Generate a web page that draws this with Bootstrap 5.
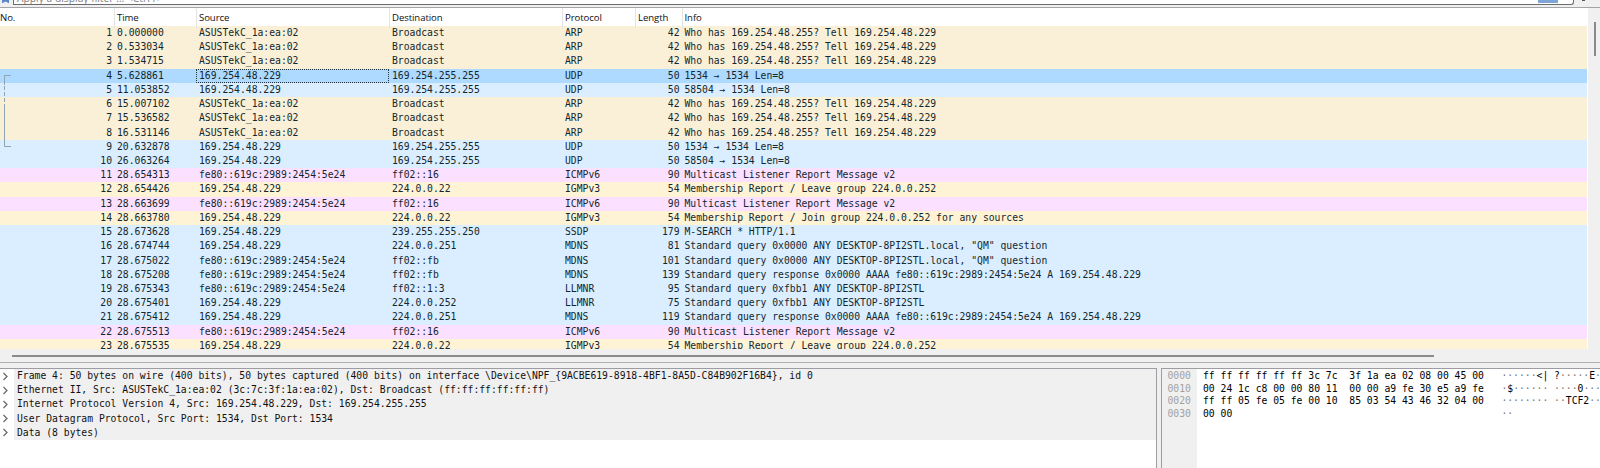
<!DOCTYPE html>
<html lang="en">
<head>
<meta charset="utf-8">
<title>Packet capture</title>
<link href="https://cdn.jsdelivr.net/npm/bootstrap@5.3.0/dist/css/bootstrap.min.css" rel="stylesheet">
<style>
html,body{height:468px;overflow:hidden}
body{background:#f0f0f0;color:#111;line-height:1;font-size:9.73px;font-family:"DejaVu Sans Mono","Liberation Mono",monospace}
.ui-font{font-family:"Open Sans","Noto Sans",sans-serif}
.filterbar{height:8px;border-bottom:1px solid #a4a4a8}
.filterbox{height:5px;width:1561px;border:1px solid #6c6c6c;border-top:0;border-radius:0 0 3px 0;background:#fff}
.filterhint{color:#808080;font-size:10.3px;line-height:14px;margin-top:-9.5px;padding-left:3px;white-space:pre}
.apply-btn{width:20px;height:3px;background:#7fa5d6;margin-right:15px}
.packet-list{height:341px}
.packet-rows{width:1588px;background:#fff}
.pk{display:grid;grid-template-columns:114px 82px 193px 173px 73px 46.5px 1fr;white-space:pre;width:1587px}
.pk-head{height:18px;font-size:9.6px;line-height:20px;letter-spacing:-.08px}
.pk-head>div{border-left:1px solid #e4e4e4;padding-left:2px}
.pk-head>div:first-child{border:0;padding-left:0}
.pk-line{height:14.22px;line-height:14.6px;color:#12272e}
.pk-line>div{padding-left:3px}
.pk-line>.num{text-align:right;padding:0 2px 0 0}
.arp{background:#faf0d7}.udp{background:#daeeff}.icmp{background:#fce0ff}.igmp{background:#fff3d6}.sel{background:#aedaff}
.cell-focus{outline:1px dotted #234;outline-offset:-1px}
.related{left:4px;top:67px;width:8px;height:72px}
.v-thumb{width:2px;height:34px;margin:14px 0 0 6px;background:#8a8a8a}
.h-scroll{height:14px;border-bottom:1px solid #b0b0b4;padding:6px 0 0 12px}
.h-thumb{width:1422px;height:2px;background:#8c8c8c}
.panes{height:100px;margin-top:5px}
.details{width:1157px;border:solid #9c9ca2;border-width:1px 1px 0 0;background:#fff}
.tree-line{height:14.2px;line-height:14.4px;white-space:pre}
.tree-text{background:#f0f0f0;padding-left:3px}
.tree-toggle{width:14px}
.hexview{border:solid #9c9ca2;border-width:1px 0 0 1px;background:#fff;margin-left:4px;line-height:12.6px;white-space:pre}
.hex-offset{width:35px;padding:1px 0 0 5.5px;background:#f0f0f0;color:#a2a2a2}
.hex-body{padding:1px 0 0 6px;color:#000}
.hex-body i{font-style:normal;color:#777}
</style>
</head>
<body>
<div class="d-flex flex-column h-100">
  <div class="filterbar d-flex overflow-hidden ui-font flex-shrink-0">
    <svg width="13" height="5" viewBox="0 0 13 5"><path d="M2 0h7v3.300L5.500 1.500 2 3.300z" fill="#5b87c8"/></svg>
    <div class="filterbox d-flex justify-content-between overflow-hidden">
      <div class="filterhint">Apply a display filter … &lt;Ctrl-/&gt;</div>
      <div class="apply-btn"></div>
    </div>
    <svg class="ms-2" width="4" height="3" viewBox="0 0 4 3"><path d="M0 0h3v1H0z" fill="#555"/></svg>
  </div>
  <div class="packet-list d-flex flex-shrink-0 overflow-hidden">
    <div class="packet-rows position-relative overflow-hidden flex-shrink-0">
      <div class="pk pk-head ui-font"><div>No.</div><div>Time</div><div>Source</div><div>Destination</div><div>Protocol</div><div>Length</div><div>Info</div></div>
      <div id="packets"></div>
      <svg class="related position-absolute" viewBox="0 0 8 72" fill="none" stroke="#8fa3b1"><path d="M7 .5H.5V10M.5 29V71.500H7"/><path d="M.5 11V29" stroke-dasharray="4 2"/></svg>
    </div>
    <div><div class="v-thumb"></div></div>
  </div>
  <div class="h-scroll flex-shrink-0"><div class="h-thumb"></div></div>
  <div class="panes d-flex flex-shrink-0">
    <div class="details flex-shrink-0" id="details"></div>
    <div class="hexview d-flex flex-grow-1 overflow-hidden">
      <div class="hex-offset flex-shrink-0">0000
0010
0020
0030</div>
      <div class="hex-body">ff ff ff ff ff ff 3c 7c  3f 1a ea 02 08 00 45 00   <i>······</i>&lt;| ?<i>·····</i>E<i>·</i>
00 24 1c c8 00 00 80 11  00 00 a9 fe 30 e5 a9 fe   <i>·</i>$<i>······ ····</i>0<i>···</i>
ff ff 05 fe 05 fe 00 10  85 03 54 43 46 32 04 00   <i>········ ··</i>TCF2<i>··</i>
00 00                                              <i>··</i></div>
    </div>
  </div>
</div>
<script src="https://cdn.jsdelivr.net/npm/bootstrap@5.3.0/dist/js/bootstrap.bundle.min.js"></script>
<script>
const asus='ASUSTekC_1a:ea:02', ip='169.254.48.229', v6='fe80::619c:2989:2454:5e24';
const who='Who has 169.254.48.255? Tell 169.254.48.229';
const host='ANY DESKTOP-8PI2STL', bc='169.254.255.255';
const answer='Standard query response 0x0000 AAAA '+v6+' A '+ip;
const listener='Multicast Listener Report Message v2', leave='Membership Report / Leave group 224.0.0.252';
const packets=[
['arp','0.000000',asus,'Broadcast','ARP',42,who],
['arp','0.533034',asus,'Broadcast','ARP',42,who],
['arp','1.534715',asus,'Broadcast','ARP',42,who],
['sel','5.628861',ip,bc,'UDP',50,'1534 → 1534 Len=8'],
['udp','11.053852',ip,bc,'UDP',50,'58504 → 1534 Len=8'],
['arp','15.007102',asus,'Broadcast','ARP',42,who],
['arp','15.536582',asus,'Broadcast','ARP',42,who],
['arp','16.531146',asus,'Broadcast','ARP',42,who],
['udp','20.632878',ip,bc,'UDP',50,'1534 → 1534 Len=8'],
['udp','26.063264',ip,bc,'UDP',50,'58504 → 1534 Len=8'],
['icmp','28.654313',v6,'ff02::16','ICMPv6',90,listener],
['igmp','28.654426',ip,'224.0.0.22','IGMPv3',54,leave],
['icmp','28.663699',v6,'ff02::16','ICMPv6',90,listener],
['igmp','28.663780',ip,'224.0.0.22','IGMPv3',54,'Membership Report / Join group 224.0.0.252 for any sources'],
['udp','28.673628',ip,'239.255.255.250','SSDP',179,'M-SEARCH * HTTP/1.1'],
['udp','28.674744',ip,'224.0.0.251','MDNS',81,'Standard query 0x0000 '+host+'.local, "QM" question'],
['udp','28.675022',v6,'ff02::fb','MDNS',101,'Standard query 0x0000 '+host+'.local, "QM" question'],
['udp','28.675208',v6,'ff02::fb','MDNS',139,answer],
['udp','28.675343',v6,'ff02::1:3','LLMNR',95,'Standard query 0xfbb1 '+host],
['udp','28.675401',ip,'224.0.0.252','LLMNR',75,'Standard query 0xfbb1 '+host],
['udp','28.675412',ip,'224.0.0.251','MDNS',119,answer],
['icmp','28.675513',v6,'ff02::16','ICMPv6',90,listener],
['igmp','28.675535',ip,'224.0.0.22','IGMPv3',54,leave]];
document.getElementById('packets').innerHTML=packets.map((p,i)=>
 `<div class="pk pk-line ${p[0]}"><div class="num">${i+1}</div><div>${p[1]}</div><div class="${p[0]==='sel'?'cell-focus':''}">${p[2]}</div><div>${p[3]}</div><div>${p[4]}</div><div class="num">${p[5]}</div><div>${p[6]}</div></div>`).join('');
const tree=['Frame 4: 50 bytes on wire (400 bits), 50 bytes captured (400 bits) on interface \\Device\\NPF_{9ACBE619-8918-4BF1-8A5D-C84B902F16B4}, id 0',
'Ethernet II, Src: ASUSTekC_1a:ea:02 (3c:7c:3f:1a:ea:02), Dst: Broadcast (ff:ff:ff:ff:ff:ff)',
'Internet Protocol Version 4, Src: 169.254.48.229, Dst: 169.254.255.255',
'User Datagram Protocol, Src Port: 1534, Dst Port: 1534','Data (8 bytes)'];
document.getElementById('details').innerHTML=tree.map(t=>
 `<div class="tree-line d-flex"><div class="tree-toggle flex-shrink-0 d-flex align-items-center"><svg width="9" height="9" viewBox="0 0 9 9" fill="none" stroke="#666" stroke-width="1.2"><path d="M3.500 1L7 4.500 3.500 8"/></svg></div><div class="tree-text flex-grow-1">${t}</div></div>`).join('');
</script>
</body>
</html>
